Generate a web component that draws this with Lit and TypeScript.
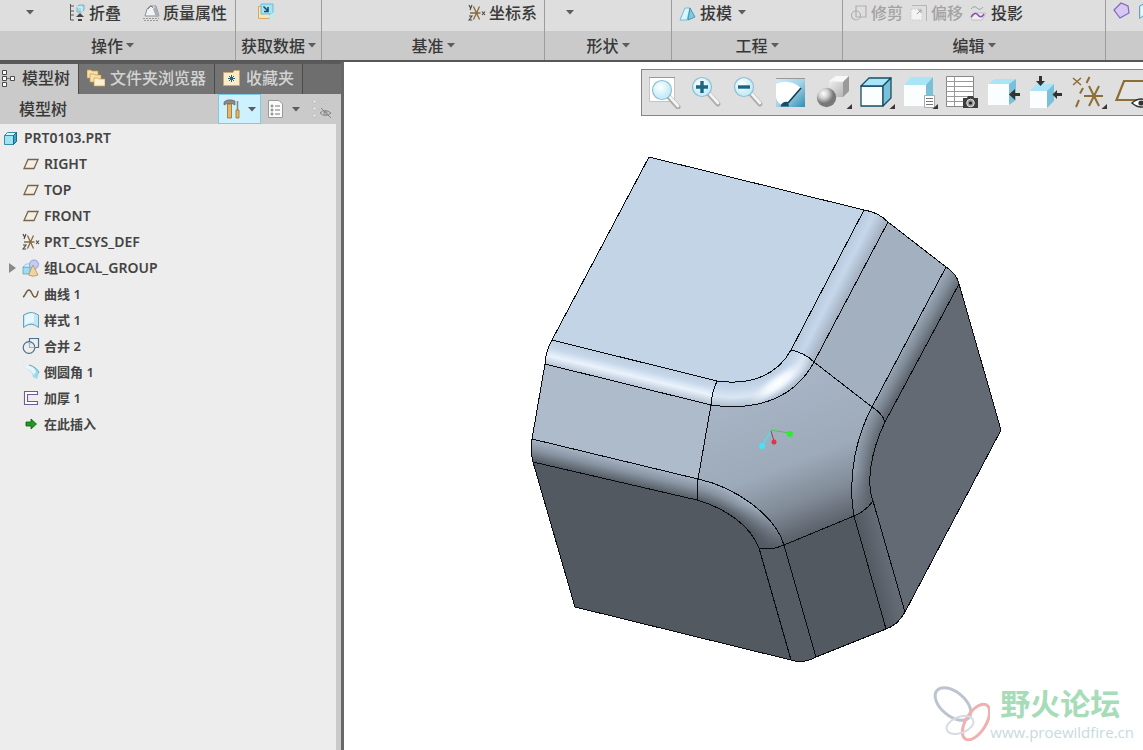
import { LitElement, html, css, svg, nothing, TemplateResult } from "lit";
import { customElement, state } from "lit/decorators.js";
import { classMap } from "lit/directives/class-map.js";

type Glyph = TemplateResult;

const small = (body: Glyph) => html`<svg class="ico" viewBox="0 0 18 18" aria-hidden="true">${body}</svg>`;
const large = (body: Glyph) => html`<svg class="tool-ico" viewBox="0 0 36 34" aria-hidden="true">${body}</svg>`;
const caret = html`<svg class="caret" viewBox="0 0 8 5" aria-hidden="true"><path d="M0 0H8L4 4.5Z" fill="#5c5c5c" /></svg>`;
const corner = svg`<path d="M36 29V34H30.500Z" fill="#3c3438"/>`;

/* ---- small icons (18 x 18) ---- */
const csys = svg`<g fill="none" stroke="#8a6a3c" stroke-width="1.300"><path d="M2 9H12.500M5.500 2.500L11.500 15.500M11.500 2.500L5.500 15.500"/></g>
  <g fill="none" stroke="#444" stroke-width="1.100"><path d="M1 1L2.500 4M4 1L2 6M1 12H4L1 16H4.200M14 7.500L17 11M17 7.500L14 11"/></g>`;
const plane = svg`<path d="M6 4.500H16L12 13.500H2Z" fill="#f4efe6" stroke="#7a6448" stroke-width="1.300"/>`;
const prism = svg`<path d="M1.500 6.500H10.500V15.500H1.500Z" fill="#9fe3f4" stroke="#3c8aa5"/><path d="M1.500 6.500L4.500 3.500H13.500L10.500 6.500Z" fill="#d3f6fd" stroke="#3c8aa5"/><path d="M10.500 6.500L13.500 3.500V12.500L10.500 15.500Z" fill="#3aa6c6" stroke="#1b6a86"/>`;
const group = svg`<path d="M1 8H8V15H1Z" fill="#9fdcf4" stroke="#4a9cc0" stroke-width=".7"/><path d="M1 8L4 5H11L8 8Z" fill="#d7f3fc" stroke="#4a9cc0" stroke-width=".5"/><circle cx="12" cy="5.500" r="4.500" fill="#c3cdf2" stroke="#7f8fd0" stroke-width=".8"/><path d="M11 6L16 16Q11 18.500 6.500 16Z" fill="#f0d3a3" stroke="#b98f4e" stroke-width=".8"/>`;
const curve = svg`<path d="M1 12C3.500 11 4 5 7 5S10 12 13 12 15 7 16.500 6" fill="none" stroke="#6e5a38" stroke-width="1.400"/>`;
const style = svg`<path d="M1.500 4Q9 -1 16.500 4V16.500Q9 10 1.500 16.500Z" fill="#bfe8f6" stroke="#6f9fb6"/><path d="M3 5Q9 1 12 3V11Q7 11 3 14Z" fill="#e6f8fd"/>`;
const merge = svg`<g fill="none" stroke="#4a7391" stroke-width="1.200"><path d="M7.500 7V1.500H16.500V10.500H13"/><circle cx="7" cy="10.500" r="5.800"/><path d="M7.500 5V10.500H12.500" stroke="#9ab5c6"/></g>`;
const round = svg`<path d="M1 4L7 2Q15 4 17 10L15 16L11 14Q11 8 1 4Z" fill="#9fd8ed"/><path d="M1 4L6 2Q12 3 14 9L11.500 12Q10 7 1 4Z" fill="#e6f7fc"/><path d="M7 2Q15 4 17 10" fill="none" stroke="#5fa6c2"/>`;
const thicken = svg`<path d="M15.500 2.500H2.500V15.500H15.500V12.500H5.500V5.500H15.500Z" fill="#fff" stroke="#6f5a96" stroke-width="1.100"/>`;
const insert = svg`<path d="M4 7H9V4L14.500 9L9 14V11H4Z" fill="#1f9b1f" stroke="#0b5a0b" stroke-width=".8"/>`;
const fold = svg`<path d="M2.500 0V16M2.500 2H6M2.500 7H6M2.500 11H6M2.500 16H6" stroke="#555" fill="none"/><path d="M9 3L11 1H16V6L14 8H9Z" fill="#9edcea" stroke="#7ba5b1" stroke-width=".8"/><path d="M9 3H14V8" fill="none" stroke="#e5fbff"/><path d="M12 9L16 13H8ZM10 15H14V17H10Z" fill="#444"/>`;
const mass = svg`<path d="M5 5L8 2H14L17 12H3Z" fill="#f1f3f5" stroke="#8a9097"/><path d="M14 2L17 12L14 13L11 5Z" fill="#a9afb6"/><path d="M6 5Q9 0 11 4" fill="none" stroke="#777"/><path d="M1 14.500H17M2 16.500H17" stroke="#999" stroke-dasharray="2 1"/>`;
const getData = svg`<path d="M1.500 4.500H12.500V16.500H1.500Z" fill="#fbe3b6" stroke="#d9a860"/><path d="M4 2H16V12H4Z" fill="#a6e4f5" stroke="#6bbad6"/><path d="M6.500 4.500L11 9M11 5V9.500H7" stroke="#124f7c" stroke-width="1.600" fill="none"/><path d="M11 14L17 10V14L13 17Z" fill="#b6eefb"/>`;
const draft = svg`<path d="M1 14L7 4H11V15L9 17Z" fill="#a6e4f2"/><path d="M6 4H11L8 16H1Z" fill="#d9f6fc" stroke="#59b1c9" stroke-width=".8"/><path d="M11 4L16 13L9 16Z" fill="#7fcadd" stroke="#2f8ba6" stroke-width=".8"/>`;
const trim = svg`<g fill="none" stroke="#b0b0b0" stroke-width="1.200"><path d="M6 2H16V13H6Z"/><circle cx="6" cy="11.500" r="4.500"/></g>`;
const offset = svg`<path d="M2 1.500H16.500V17" fill="none" stroke="#b5b5b5"/><path d="M1 5H12V16H1Z" fill="#f3f3f3" stroke="#cfcfcf" stroke-dasharray="2 1"/><path d="M7 10L11 6M8 6H11V9" stroke="#9a9a9a" fill="none"/>`;
const project = svg`<path d="M1 5Q4 1 7 4T13 3" fill="none" stroke="#9aa0a6"/><path d="M1 15L5 9H16L12 16H1" fill="#eee" stroke="#b5b5b5" stroke-width=".8"/><path d="M1 13Q5 7 8 11T14 10" fill="none" stroke="#8a4fae" stroke-width="1.500"/>`;
const boundary = svg`<path d="M1 8L8 1L15 4L16 11L7 16Z" fill="#d6c8f2" stroke="#8566b8" stroke-width="1.200"/>`;
const treeTab = svg`<g fill="#fff" stroke="#4a4a4a"><path d="M2.500 1.500H6.500V5.500H2.500ZM2.500 7.500H6.500V11.500H2.500ZM2.500 13.500H6.500V17.500H2.500ZM10.500 7.500H14.500V11.500H10.500Z"/></g><path d="M7 9.500H10" stroke="#777"/>`;
const folders = svg`<g fill="#f9dfa9" stroke="#c79b4b" stroke-width=".7"><path d="M0 1H4L5 2H11V9H0Z"/><path d="M3 5H7L8 6H14V13H3Z"/><path d="M7 9H11L12 10H18V17H7Z" fill="#fdf0cf"/></g>`;
const favourite = svg`<path d="M0.500 3.500H10L11 1.500H16.500V16.500H0.500Z" fill="#fbecc8" stroke="#c9a769" stroke-width=".8"/><path d="M8.500 6V13M5 9.500H12M6 7L11 12M11 7L6 12" stroke="#2d5c78"/>`;
const hammer = svg`<path d="M1 3Q4 0 9 1L12 2V6L9 4.500H4L1 6Z" fill="#8b8b8b" stroke="#555" stroke-width=".6"/><path d="M4.500 5H8.500V19H4.500Z" fill="#e7b765" stroke="#97702f" stroke-width=".8"/><path d="M14.500 2V11" stroke="#888" stroke-width="1.600"/><path d="M13 11H16V19H13Z" fill="#e7b765" stroke="#97702f" stroke-width=".8"/>`;
const sheet = svg`<path d="M1.500 1.500H12L15.500 5V18.500H1.500Z" fill="#fbfbfb" stroke="#999"/><g fill="none" stroke="#777"><circle cx="5" cy="7" r="1"/><circle cx="5" cy="11" r="1"/><circle cx="5" cy="15" r="1"/><path d="M8 7H13M8 11H13M8 15H13"/></g>`;
const hiddenTree = svg`<g fill="#e8e8e8" stroke="#b5b5b5" stroke-width=".6"><path d="M1 1H4V4H1ZM1 8H4V11H1ZM1 15H4V18H1ZM8 2H10V4H8ZM8 9H10V11H8ZM13 2H15V4H13Z"/></g><g fill="none" stroke="#858585"><path d="M8 14Q13 9 19 14Q13 19 8 14ZM9 9L19 19"/><circle cx="13.500" cy="14" r="1.500"/></g>`;

/* ---- graphics toolbar icons (36 x 34) ---- */
const lens = (cx: number, cy: number) => svg`<path d="M${cx + 7} ${cy + 7}L${cx + 16} ${cy + 17}" stroke="#ababab" stroke-width="5" stroke-linecap="round"/><path d="M${cx + 8} ${cy + 7}L${cx + 16} ${cy + 16}" stroke="#f4f4f4" stroke-width="2.800" stroke-linecap="round"/><circle cx=${cx} cy=${cy} r="9.500" fill="url(#glass)" stroke="#8fbfd2" stroke-width="1.200"/>`;
const box = (x: number, y: number, w: number, h: number, d: number, r: number, edge = "none") => svg`<g stroke=${edge} stroke-width="1.300" stroke-linejoin="round"><path d="M${x} ${y}h${w}v${h}h${-w}Z" fill="#fbfeff"/><path d="M${x} ${y}l${d} ${-r}h${w}l${-d} ${r}Z" fill="#aae4f7"/><path d="M${x + w} ${y}l${d} ${-r}v${h}l${-d} ${r}Z" fill="#7ac0d8"/></g>`;
const GOLD = "#8c6d34";

interface Tool { name: string; icon: Glyph; menu?: boolean }
const TOOLS: Tool[] = [
  { name: "重新调整", icon: svg`<path d="M2.500 2.500H27.500V26.500H2.500Z" fill="#fff" stroke="#c4c4c4"/><path d="M2 2.500H28" stroke="#999"/>${lens(15, 15)}` },
  { name: "放大", icon: svg`${lens(13, 12)}<path d="M7 12H19M13 6V18" stroke="#1d6480" stroke-width="3.400"/>` },
  { name: "缩小", icon: svg`${lens(13, 12)}<path d="M7 12H19" stroke="#1d6480" stroke-width="3.400"/>` },
  { name: "重画", icon: svg`<path d="M3 4H32V32H3Z" fill="url(#sky)"/><path d="M3 3.500H32" stroke="#999"/><path d="M3 9Q16 3 28 13L13 30H9Q4 28 3 22Z" fill="#fff"/><path d="M28 13L15 28" stroke="#123c50" stroke-width="1.600"/><path d="M15 27Q9 26 7.500 31.500H16Z" fill="#1a4d64"/>` },
  { name: "着色", menu: true, icon: svg`<path d="M13 6L20 1H33V16L27 22H13Z" fill="url(#steel)"/><path d="M13 6L20 1H33L27 7Z" fill="#f8f8f8"/><path d="M27 7L33 1V16L27 22Z" fill="#9a9a9a"/><circle cx="10.500" cy="22.500" r="9.700" fill="url(#ball)"/>` },
  { name: "显示样式", menu: true, icon: box(2, 11, 22, 20, 8, 8, "#164f68") },
  { name: "已保存方向", menu: true, icon: svg`${box(2, 10, 22, 21, 7, 8)}<path d="M22.500 20.500H32.500V32.500H22.500Z" fill="#fff" stroke="#aaa"/><path d="M24 23.500H31M24 26.500H31M24 29.500H31" stroke="#777"/>` },
  { name: "视图管理器", icon: svg`<path d="M2.500 1.500H29.500V31.500H2.500Z" fill="#fff" stroke="#888"/><path d="M2 6.500H29M2 11.500H29M2 16.500H29M2 21.500H29M2 26.500H29M10.500 1V31" stroke="#999"/><path d="M19 23H23L24 21H29L30 23H34V33H19Z" fill="#3e3e3e"/><circle cx="26.500" cy="28" r="3.800" fill="#999" stroke="#e5e5e5"/><circle cx="26.500" cy="28" r="1.600" fill="#222"/>` },
  { name: "外观", icon: svg`${box(2, 9, 21, 21, 7, 5)}<path d="M23 19.500L29 14V18H34V21H29V25Z" fill="#333"/>` },
  { name: "截面", icon: svg`${box(2, 16, 17, 17, 7, 7)}<path d="M12.500 11L8 6H11V1H14V6H17Z" fill="#333"/><path d="M24.500 19.500L29 15V18H34V21H29V24Z" fill="#333"/>` },
  { name: "基准显示过滤器", menu: true, icon: svg`<g stroke=${GOLD} stroke-width="2" fill="none"><path d="M2 3L10 10M10 3L2 10" stroke-width="1.500"/><path d="M18.500 2L15.500 8M12 13L9 18.500M8 25L5 32M13 21H32M18 11L28 31M28 11L18 31"/></g>` },
  { name: "注释显示", icon: svg`<path d="M11 6H40L33 25H3.500Z" fill="#e4e4e4" stroke=${GOLD} stroke-width="2.200"/><path d="M19 28Q28 20 37 28Q28 36 19 28Z" fill="#fff" stroke="#333" stroke-width="1.500"/><circle cx="28" cy="28" r="2.600" fill="#333"/>` },
];

interface Command { text?: string; icon?: Glyph; arrow?: boolean; disabled?: boolean; name?: string }
interface Panel { id: string; title: string; items: Command[] }
const PANELS: Panel[] = [
  { id: "ops", title: "操作", items: [{ arrow: true, name: "更多操作" }, { icon: fold, text: "折叠" }, { icon: mass, text: "质量属性" }] },
  { id: "data", title: "获取数据", items: [{ icon: getData, name: "获取数据" }] },
  { id: "datum", title: "基准", items: [{ icon: csys, text: "坐标系" }] },
  { id: "shape", title: "形状", items: [{ arrow: true, name: "更多形状" }] },
  { id: "eng", title: "工程", items: [{ icon: draft, text: "拔模", arrow: true }] },
  { id: "edit", title: "编辑", items: [{ icon: trim, text: "修剪", disabled: true }, { icon: offset, text: "偏移", disabled: true }, { icon: project, text: "投影" }] },
  { id: "surf", title: "", items: [{ icon: boundary, name: "边界混合" }, { icon: style, name: "样式" }] },
];

const TREE: { icon: Glyph; text: string; open?: boolean }[] = [
  { icon: plane, text: "RIGHT" },
  { icon: plane, text: "TOP" },
  { icon: plane, text: "FRONT" },
  { icon: csys, text: "PRT_CSYS_DEF" },
  { icon: group, text: "组LOCAL_GROUP", open: false },
  { icon: curve, text: "曲线 1" },
  { icon: style, text: "样式 1" },
  { icon: merge, text: "合并 2" },
  { icon: round, text: "倒圆角 1" },
  { icon: thicken, text: "加厚 1" },
  { icon: insert, text: "在此插入" },
];

const TABS = [
  { icon: treeTab, text: "模型树" },
  { icon: folders, text: "文件夹浏览器" },
  { icon: favourite, text: "收藏夹" },
];

/* ---- shading of the curved fillets ---- */
type Stop = [number, number, number, number]; // offset, r, g, b
const colourAt = (stops: Stop[], t: number) => {
  let i = 1;
  while (i < stops.length - 1 && stops[i][0] < t) i++;
  const a = stops[i - 1], b = stops[i];
  const k = (t - a[0]) / (b[0] - a[0]);
  return `rgb(${[1, 2, 3].map(c => Math.round(a[c] + (b[c] - a[c]) * k)).join(",")})`;
};
/* Strokes of falling width along one edge, so the tone changes with the distance from it. */
const band = (clip: string, edge: string, width: number, stops: Stop[]) =>
  svg`<g clip-path="url(#${clip})" fill="none">${Array.from({ length: width }, (_, i) => {
    const t = 1 - i / width;
    return svg`<path d=${edge} stroke=${colourAt(stops, t)} stroke-width=${2 * width * t + (i === 0 ? 20 : 0)}/>`;
  })}</g>`;

const BEND_TOP = "M717 381C752 386 778 374 791 350Q805 353 814 362C796 396 760 412 711 405Q712 392 717 381Z";
const BEND_LEFT = "M698 479C735 487 775 515 784 545Q770 551 759 548C750 525 725 508 697 500Z";
const BEND_RIGHT = "M872 407Q882 413 885 422C869 455 867 485 873 501Q865 512 854 516C847 475 857 435 872 407Z";

@customElement("app-root")
export class AppRoot extends LitElement {
  @state() private tab = 0;

  static styles = css`
    :host {
      display: flex;
      flex-direction: column;
      height: 100vh;
      overflow: hidden;
      background: #fff;
      color: #383838;
      font: 500 16px/20px "Noto Sans", "Noto Sans CJK SC", sans-serif;
    }
    * { box-sizing: border-box; }
    button {
      display: inline-flex;
      align-items: center;
      justify-content: center;
      margin: 0;
      padding: 0;
      border: 0;
      background: none;
      color: inherit;
      font: inherit;
      white-space: nowrap;
    }
    button:disabled { color: #a3a3a3; }
    svg { display: block; flex: none; }
    .ico { width: 18px; height: 18px; }
    .caret { width: 8px; height: 5px; }
    .paints { position: absolute; width: 0; height: 0; }

    .ribbon {
      display: flex;
      flex: none;
      border-bottom: 2px solid #585858;
      background: #dedede;
    }
    .panel { flex: none; border-right: 1px solid #9c9c9c; }
    .ops { width: 236px; }
    .data { width: 86px; }
    .datum { width: 223px; }
    .shape { width: 127px; }
    .eng { width: 171px; }
    .edit { width: 263px; }
    .surf { flex: 1 0 0; min-width: 0; overflow: hidden; border-right: 0; }
    .items { display: flex; align-items: center; height: 31px; padding: 0 7px 6px; gap: 7px; }
    .ops .items { gap: 21px; padding-left: 12px; }
    .data .items { padding-left: 21px; padding-bottom: 10px; }
    .surf .items { padding-bottom: 10px; }
    .datum .items { justify-content: flex-end; }
    .command { gap: 3px; }
    .command .caret { margin-left: 3px; }
    .drop { width: 35px; height: 20px; }
    .title { display: flex; width: 100%; height: 29px; gap: 3px; background: #cacaca; }
    .ops .title { padding-right: 10px; }

    .work { display: flex; flex: 1; min-height: 0; }
    .side {
      display: flex;
      flex: none;
      flex-direction: column;
      width: 344px;
      border-right: 3px solid #686868;
      background: #ededed;
    }
    .tabs { display: flex; height: 32px; background: #6e6e6e; border-top: 2px solid #5a5a5a; }
    .tab { gap: 5px; padding: 0 8px 2px; border-right: 1px solid #4b4b4b; background: #747474; color: #d3d3d3; }
    .tab.on { gap: 4px; padding-left: 0; background: #cacaca; color: #383838; }
    .bar { display: flex; align-items: center; height: 30px; padding: 0 3px 0 19px; background: #cacaca; }
    .heading { margin: 0 auto 0 0; font: inherit; }
    .setting { gap: 5px; height: 30px; padding: 0 5px; border: 1px solid transparent; }
    .setting.lit { padding: 0 4px; background: #cdf2fd; border-color: #7bcbe6; }
    .setting .ico { width: 20px; height: 20px; }
    .treebox { flex: 1; border-right: 5px solid #cacaca; }
    .tree { margin: 0; padding: 1px 0 0; list-style: none; font-size: 13px; font-weight: 600; line-height: 26px; color: #444; }
    .latin { font-size: 14px; }
    .kids { margin: 0; padding: 0; list-style: none; }
    .row { display: flex; align-items: center; height: 26px; gap: 4px; padding-left: 8px; }
    .root { padding-left: 3px; gap: 3px; }
    .twist { width: 10px; height: 10px; }

    .view { position: relative; display: flex; flex: 1; flex-direction: column; min-width: 0; overflow: hidden; background: #fff; }
    .tools {
      display: flex;
      align-items: center;
      align-self: flex-end;
      flex: none;
      width: 502px;
      max-width: 100%;
      height: 47px;
      margin-top: 7px;
      padding: 0 0 2px 2px;
      border: 1px solid #858585;
      border-right: 0;
      background: #dfdfdf;
      overflow: hidden;
    }
    .tool { flex: none; width: 42px; height: 34px; }
    .tool.menu { width: 43px; }
    .tool-ico { width: 36px; height: 34px; }
    .scene { flex: 1; width: 100%; min-height: 0; }
    .brand {
      position: absolute;
      right: 9px;
      bottom: 6px;
      display: flex;
      align-items: center;
      color: #c8dade;
      text-decoration: none;
    }
    .brand-logo { width: 60px; height: 60px; }
    .brand-text { display: flex; flex-direction: column; }
    .brand-name { padding-left: 10px; font: 700 30px/36px "Noto Sans", "Noto Sans CJK SC", sans-serif; color: #a6dcb8; }
    .brand-url { font: 400 15px/20px "Open Sans", sans-serif; }
  `;

  private command(c: Command) {
    if (!c.icon) return html`<button class="drop" aria-label=${c.name ?? ""}>${caret}</button>`;
    return html`<button class="command" ?disabled=${c.disabled} aria-label=${c.text ?? c.name ?? ""}>
      ${small(c.icon)}${c.text ? html`<span>${c.text}</span>` : nothing}${c.arrow ? caret : nothing}
    </button>`;
  }

  private scene() {
    return html`<svg class="scene" viewBox="344 116 799 634" role="img" aria-label="PRT0103">
      <defs>
        <linearGradient id="s1" gradientUnits="userSpaceOnUse" x1="630" y1="359" x2="624" y2="384">
          <stop offset="0" stop-color="#bccde0" /><stop offset=".3" stop-color="#c6d7ea" /><stop offset=".62" stop-color="#eaf3fc" /><stop offset="1" stop-color="#b3c1d2" />
        </linearGradient>
        <linearGradient id="s2" gradientUnits="userSpaceOnUse" x1="827" y1="280" x2="850" y2="292">
          <stop offset="0" stop-color="#b9c9dc" /><stop offset=".45" stop-color="#c6d7eb" /><stop offset="1" stop-color="#a3b0c0" />
        </linearGradient>
        <linearGradient id="s3" gradientUnits="userSpaceOnUse" x1="615" y1="459" x2="610" y2="480">
          <stop offset="0" stop-color="#a6b3c3" /><stop offset=".45" stop-color="#8894a2" /><stop offset="1" stop-color="#545a62" />
        </linearGradient>
        <linearGradient id="s4" gradientUnits="userSpaceOnUse" x1="909" y1="337" x2="925" y2="346">
          <stop offset="0" stop-color="#99a5b4" /><stop offset=".5" stop-color="#7f8a97" /><stop offset="1" stop-color="#5f666f" />
        </linearGradient>
        <linearGradient id="s5" gradientUnits="userSpaceOnUse" x1="740" y1="400" x2="795" y2="545">
          <stop offset="0" stop-color="#a7b4c5" /><stop offset=".5" stop-color="#9daab9" /><stop offset=".75" stop-color="#828c99" /><stop offset="1" stop-color="#555a62" />
        </linearGradient>
        <linearGradient id="s8" gradientUnits="userSpaceOnUse" x1="870" y1="572" x2="889" y2="567">
          <stop offset="0" stop-color="#545a62" /><stop offset="1" stop-color="#646b75" />
        </linearGradient>
        <linearGradient id="fade" gradientUnits="userSpaceOnUse" x1="0" y1="470" x2="0" y2="520">
          <stop offset="0" stop-color="#5a6068" stop-opacity="0" /><stop offset="1" stop-color="#5a6068" stop-opacity=".85" />
        </linearGradient>
        <linearGradient id="fade2" gradientUnits="userSpaceOnUse" x1="0" y1="505" x2="0" y2="548">
          <stop offset="0" stop-color="#545a62" stop-opacity="0" /><stop offset="1" stop-color="#545a62" stop-opacity=".95" />
        </linearGradient>
        <radialGradient id="shine" gradientUnits="userSpaceOnUse" cx="0" cy="0" r="1" gradientTransform="translate(778 383) rotate(-36) scale(38 10)">
          <stop offset="0" stop-color="#fff" /><stop offset=".4" stop-color="#f3f9fe" stop-opacity=".9" /><stop offset="1" stop-color="#d8e5f3" stop-opacity="0" />
        </radialGradient>
        <clipPath id="bendTop"><path d=${BEND_TOP} /></clipPath>
        <clipPath id="bendLeft"><path d=${BEND_LEFT} /></clipPath>
        <clipPath id="bendRight"><path d=${BEND_RIGHT} /></clipPath>
      </defs>
      <path fill="#c3d4e7" d="M649 157L864 210L791 350C778 374 752 386 717 381L552 340Z" />
      <path fill="url(#s1)" d="M552 340L717 381Q712 392 711 405L545 364Q546 350 552 340Z" />
      ${band("bendTop", "M552 340L717 381C752 386 778 374 791 350L864 210", 25, [[0, 188, 205, 224], [0.3, 198, 215, 234], [0.62, 218, 230, 243], [1, 176, 190, 207]])}
      <path fill="url(#shine)" d=${BEND_TOP} />
      <path fill="url(#s2)" d="M864 210Q878 212 888 222L814 362Q805 353 791 350Z" />
      <path fill="#a3b0bf" d="M888 222L946 267L872 407L814 362Z" />
      <path fill="url(#s4)" d="M946 267Q957 274 959 284L885 422Q882 413 872 407Z" />
      <path fill="#636a73" d="M959 284L1001 430L905 612L873 501C867 485 869 455 885 422Z" />
      <path fill="#aebbcb" d="M545 364L711 405L698 479L532 439Z" />
      <path fill="url(#s3)" d="M532 439L698 479L697 500L533 462Q530 450 532 439Z" />
      <path fill="url(#s5)" d="M711 405C760 412 796 396 814 362L872 407C857 435 847 475 854 516L784 545C775 515 735 487 698 479Z" />
      ${band("bendLeft", "M532 439L698 479C735 487 775 515 784 545L816 657", 22, [[0, 166, 179, 195], [0.45, 136, 148, 162], [1, 84, 90, 98]])}
      <path fill="url(#fade2)" d=${BEND_LEFT} />
      ${band("bendRight", "M946 267L872 407C857 435 847 475 854 516L886 629", 18, [[0, 150, 162, 177], [0.5, 125, 135, 148], [1, 98, 105, 114]])}
      <path fill="url(#fade)" d=${BEND_RIGHT} />
      <path fill="#535960" d="M533 462L697 500C725 508 750 525 759 548L791 660L575 607Z" />
      <path fill="#565c63" d="M759 548Q770 551 784 545L816 657Q804 664 791 660Z" />
      <path fill="#535960" d="M784 545L854 516L886 629L816 657Z" />
      <path fill="url(#s8)" d="M854 516Q865 512 873 501L905 612Q898 625 886 629Z" />
      <g fill="none" stroke="#0a0c10" stroke-width="1" shape-rendering="crispEdges">
        <path d="M649 157L864 210Q878 212 888 222L946 267Q957 274 959 284L1001 430L905 612Q898 625 886 629L816 657Q804 664 791 660L575 607L533 462Q530 450 532 439L545 364Q546 350 552 340Z" />
        <path d="M552 340L717 381C752 386 778 374 791 350L864 210" />
        <path d="M545 364L711 405C760 412 796 396 814 362L888 222" />
        <path d="M717 381Q712 392 711 405L698 479L697 500" />
        <path d="M791 350Q805 353 814 362L872 407Q882 413 885 422" />
        <path d="M532 439L698 479C735 487 775 515 784 545L816 657" />
        <path d="M533 462L697 500C725 508 750 525 759 548L791 660" />
        <path d="M946 267L872 407C857 435 847 475 854 516L886 629" />
        <path d="M959 284L885 422C869 455 867 485 873 501L905 612" />
        <path d="M759 548Q770 551 784 545L854 516Q865 512 873 501" />
      </g>
      <path d="M771 431L763 444" stroke="#55dce8" stroke-width="1.500" /><circle cx="762" cy="446" r="3" fill="#3fe6f5" />
      <path d="M771 431L774 441" stroke="#a83a4c" /><circle cx="774" cy="442" r="2.500" fill="#e03448" />
      <path d="M771 430L789 433" stroke="#4ac850" /><circle cx="790" cy="434" r="3" fill="#2cee2c" />
    </svg>`;
  }

  render() {
    return html`
      <svg class="paints" aria-hidden="true">
        <defs>
          <radialGradient id="glass" cx=".4" cy=".35"><stop offset="0" stop-color="#fff" /><stop offset="1" stop-color="#c9eef9" /></radialGradient>
          <radialGradient id="ball" cx=".35" cy=".3"><stop offset="0" stop-color="#fff" /><stop offset=".5" stop-color="#cfcfcf" /><stop offset="1" stop-color="#787878" /></radialGradient>
          <linearGradient id="sky" x1="0" y1="0" x2="1" y2="1"><stop offset="0" stop-color="#cfecf5" /><stop offset=".5" stop-color="#a3d3e5" /><stop offset="1" stop-color="#2f8db4" /></linearGradient>
          <linearGradient id="steel" x1="0" y1="0" x2="1" y2="1"><stop offset="0" stop-color="#f8f8f8" /><stop offset="1" stop-color="#a8a8a8" /></linearGradient>
        </defs>
      </svg>
      <header class="ribbon">
        ${PANELS.map(p => html`<section class="panel ${p.id}">
          <div class="items">${p.items.map(c => this.command(c))}</div>
          <button class="title" aria-label=${p.title || "曲面"}>${p.title ? html`<span>${p.title}</span>${caret}` : nothing}</button>
        </section>`)}
      </header>
      <main class="work">
        <aside class="side">
          <div class="tabs" role="tablist">
            ${TABS.map((t, i) => html`<button role="tab" aria-selected=${this.tab === i ? "true" : "false"}
              class=${classMap({ tab: true, on: this.tab === i })} @click=${() => (this.tab = i)}>${small(t.icon)}<span>${t.text}</span></button>`)}
          </div>
          <div class="bar">
            <h2 class="heading">模型树</h2>
            <button class="setting lit" aria-label="设置"><svg class="ico" viewBox="0 0 20 20">${hammer}</svg>${caret}</button>
            <button class="setting" aria-label="显示"><svg class="ico" viewBox="0 0 20 20">${sheet}</svg>${caret}</button>
            <button class="setting" aria-label="隐藏项"><svg class="ico" viewBox="0 0 20 20">${hiddenTree}</svg></button>
          </div>
          <div class="treebox">
            <ul class="tree" role="tree">
              <li role="treeitem" aria-expanded="true">
                <div class="row root">${small(prism)}<span class="latin">PRT0103.PRT</span></div>
                <ul class="kids" role="group">
                  ${TREE.map(n => html`<li class="row" role="treeitem">
                    <svg class="twist" viewBox="0 0 10 10" aria-hidden="true">${n.open === false ? svg`<path d="M1 0L8 5L1 10Z" fill="#8a8a8a"/>` : nothing}</svg>
                    ${small(n.icon)}<span class=${classMap({ latin: /[A-Z]/.test(n.text) })}>${n.text}</span></li>`)}
                </ul>
              </li>
            </ul>
          </div>
        </aside>
        <section class="view">
          <div class="tools" role="toolbar" aria-label="图形">
            ${TOOLS.map(t => html`<button class=${classMap({ tool: true, menu: !!t.menu })} aria-label=${t.name}>${large(svg`${t.icon}${t.menu ? corner : nothing}`)}</button>`)}
          </div>
          ${this.scene()}
          <a class="brand" href="#forum">
            <svg class="brand-logo" viewBox="0 0 60 60" aria-hidden="true" fill="none">
              <ellipse cx="23" cy="20" rx="21" ry="12" transform="rotate(40 23 20)" stroke="#bcc4d0" stroke-width="3" />
              <ellipse cx="46" cy="38" rx="20" ry="10" transform="rotate(-58 46 38)" stroke="#f0b0b0" stroke-width="3" />
              <ellipse cx="30" cy="41" rx="14" ry="8" transform="rotate(-20 30 41)" stroke="#d6dce2" stroke-width="2" />
            </svg>
            <span class="brand-text"><span class="brand-name">野火论坛</span><span class="brand-url">www.proewildfire.cn</span></span>
          </a>
        </section>
      </main>
    `;
  }
}
